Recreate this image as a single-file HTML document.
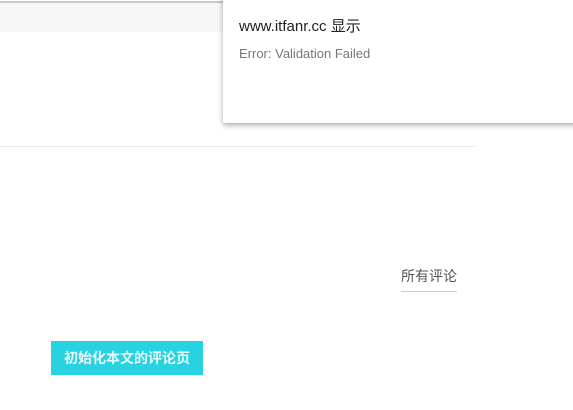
<!DOCTYPE html>
<html><head><meta charset="utf-8"><style>
html,body{margin:0;padding:0;width:573px;height:410px;overflow:hidden;background:#fff;font-family:"Liberation Sans","Noto Sans CJK SC",sans-serif;position:relative}
.topline{position:absolute;left:0;top:1px;width:573px;height:2px;background:#c8c8c8}
.band{position:absolute;left:0;top:3px;width:573px;height:29px;background:#f7f7f7}
.hr{position:absolute;left:0;top:146px;width:476px;height:1px;background:#ececec}
.tab{position:absolute;left:401px;top:266px;font-size:14px;color:#555;line-height:20px}
.tabline{position:absolute;left:401px;top:291px;width:56px;height:1px;background:#ccc}
.btn{position:absolute;left:51px;top:341px;width:152px;height:34px;background:#29d2e0;color:#e6fbfd;font-weight:bold;font-size:14px;line-height:34px;text-align:center}
.dlg{position:absolute;left:223px;top:-5px;width:360px;height:128px;background:#fff;box-shadow:0 2px 6px rgba(0,0,0,.35);border-radius:2px}
.t1{position:absolute;left:239px;top:15px;font-size:15px;color:#222}
.t2{position:absolute;left:239px;top:46px;font-size:13px;color:#777}
</style></head><body>
<div class="topline"></div><div class="band"></div>
<div class="hr"></div>
<div class="tab">所有评论</div><div class="tabline"></div>
<div class="btn">初始化本文的评论页</div>
<div class="dlg"></div>
<div class="t1">www.itfanr.cc 显示</div>
<div class="t2">Error: Validation Failed</div>
</body></html>
